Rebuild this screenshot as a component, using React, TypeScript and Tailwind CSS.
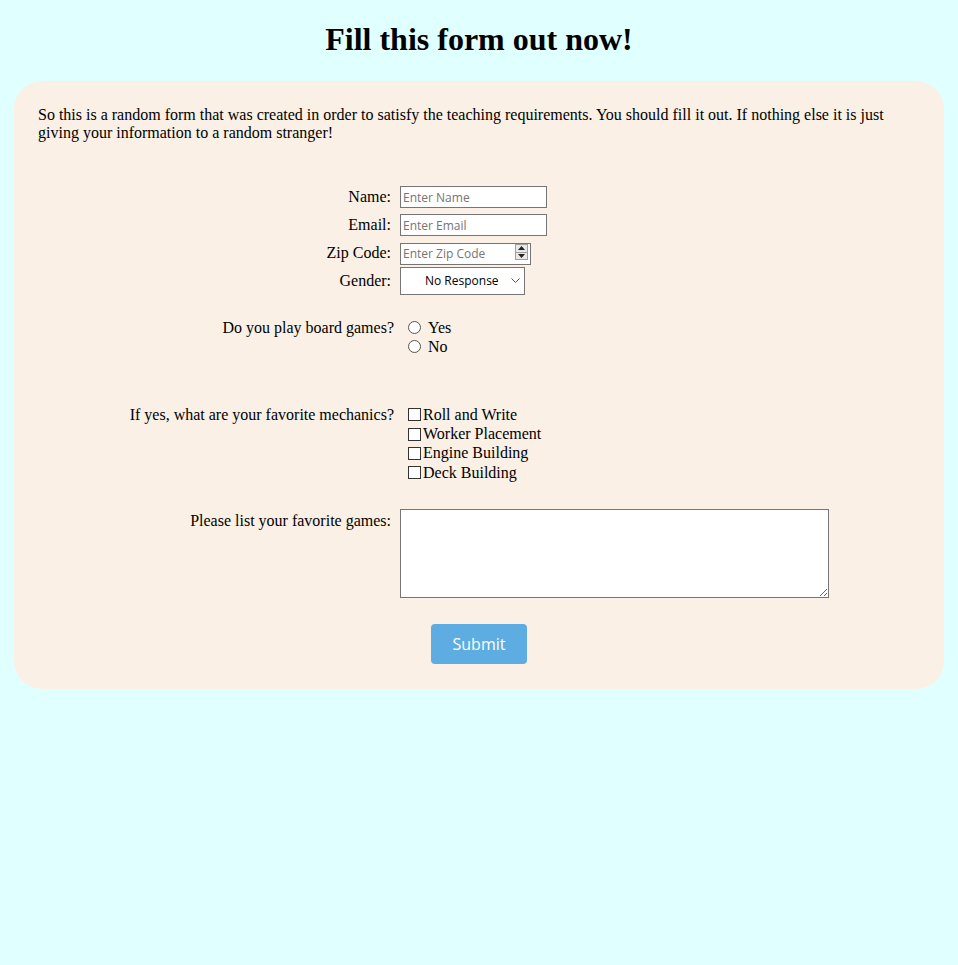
const SERIF = "font-['Liberation_Serif','Times_New_Roman',serif]"

function Row({ label, children }: { label: string; children: React.ReactNode }) {
  return (
    <div className="flex h-[28px] items-center">
      <label className="w-[353px] text-right">{label}</label>
      <div className="ml-[9px] flex items-center">{children}</div>
    </div>
  )
}

const inputCls =
  "h-[22px] border border-[#767676] bg-white px-[2px] text-[12px] font-['Open_Sans','Noto_Sans',sans-serif] placeholder:text-[#757575] outline-none"

export default function App() {
  const mechanics = ['Roll and Write', 'Worker Placement', 'Engine Building', 'Deck Building']

  return (
    <div className={`min-h-[965px] bg-[#e0ffff] text-black text-[16px] ${SERIF}`}>
      <h1 className="pt-[21px] text-center text-[32px] font-bold leading-[37px]">Fill this form out now!</h1>

      <div className="mx-[14px] mt-[23px] rounded-[28px] bg-[#faf0e6] px-[24px] pt-[25px] pb-[25px]">
        <p className="leading-[18px]">
          So this is a random form that was created in order to satisfy the teaching requirements. You should fill it out. If nothing else it is just
          giving your information to a random stranger!
        </p>

        <form className="mt-[41px]" onSubmit={e => e.preventDefault()}>
          <Row label="Name:">
            <input type="text" placeholder="Enter Name" className={`${inputCls} w-[147px]`} />
          </Row>
          <Row label="Email:">
            <input type="email" placeholder="Enter Email" className={`${inputCls} w-[147px]`} />
          </Row>
          <Row label="Zip Code:">
            <div className="relative">
              <input type="text" placeholder="Enter Zip Code" className={`${inputCls} w-[131px]`} />
              <div className="absolute right-[3px] top-[3px] flex h-[16px] w-[13px] flex-col border border-[#a0a0a0] bg-[#e9e9e9]">
                <div className="flex flex-1 items-center justify-center border-b border-[#a0a0a0]">
                  <svg width="7" height="4" viewBox="0 0 7 4"><path d="M3.5 0L7 4H0z" fill="#222" /></svg>
                </div>
                <div className="flex flex-1 items-center justify-center">
                  <svg width="7" height="4" viewBox="0 0 7 4"><path d="M0 0h7L3.5 4z" fill="#222" /></svg>
                </div>
              </div>
            </div>
          </Row>
          <Row label="Gender:">
            <div className="relative">
              <select
                defaultValue="none"
                className="h-[28px] w-[125px] appearance-none rounded-none border border-[#767676] bg-white pl-[24px] text-[12px] font-['Open_Sans','Noto_Sans',sans-serif] text-black outline-none"
              >
                <option value="none">No Response</option>
                <option value="male">Male</option>
                <option value="female">Female</option>
                <option value="other">Other</option>
              </select>
              <svg className="pointer-events-none absolute right-[5px] top-[11px]" width="9" height="6" viewBox="0 0 9 6">
                <path d="M0.5 0.5L4.5 4.5L8.5 0.5" stroke="#555" fill="none" strokeWidth="1" />
              </svg>
            </div>
          </Row>

          <div className="mt-[23px] flex">
            <div className="w-[356px] text-right leading-[19px]">Do you play board games?</div>
            <div className="ml-[14px] flex flex-col">
              {['Yes', 'No'].map(v => (
                <label key={v} className="flex h-[19px] items-center">
                  <input type="radio" name="games" value={v} className="h-[13px] w-[13px] appearance-none rounded-full border border-[#555] bg-white" />
                  <span className="ml-[7px]">{v}</span>
                </label>
              ))}
            </div>
          </div>

          <div className="mt-[49px] flex">
            <div className="w-[356px] text-right leading-[19px]">If yes, what are your favorite mechanics?</div>
            <div className="ml-[14px] flex flex-col">
              {mechanics.map(m => (
                <label key={m} className="flex h-[19.4px] items-center">
                  <input type="checkbox" value={m} className="h-[13px] w-[13px] appearance-none border border-[#333] bg-white" />
                  <span className="ml-[2px]">{m}</span>
                </label>
              ))}
            </div>
          </div>

          <div className="mt-[26px] flex">
            <label className="w-[353px] pt-[3px] text-right leading-[18px]">Please list your favorite games:</label>
            <textarea className="ml-[9px] h-[89px] w-[429px] border border-[#767676] bg-white outline-none" />
          </div>

          <div className="mt-[26px] flex justify-center">
            <button
              type="submit"
              className="h-[40px] w-[96px] rounded-[4px] bg-[#5dade2] text-[16px] text-white font-['Open_Sans','Noto_Sans',sans-serif]"
            >
              Submit
            </button>
          </div>
        </form>
      </div>
    </div>
  )
}
